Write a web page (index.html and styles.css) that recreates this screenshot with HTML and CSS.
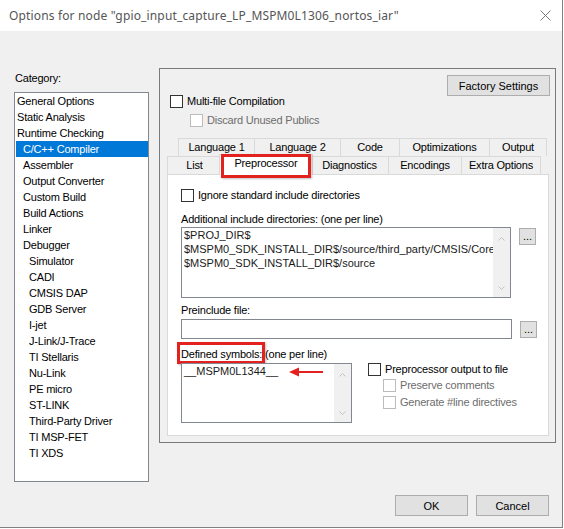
FILE: index.html
```html
<!DOCTYPE html>
<html lang="en">
<head>
    <meta charset="UTF-8">
    <title>Options for node</title>
    <link rel="stylesheet" href="styles.css">
</head>
<body>
<div class="window">
    <div class="titlebar">
        <span class="title">Options for node "gpio_input_capture_LP_MSPM0L1306_nortos_iar"</span>
        <svg class="close" width="11" height="11" viewBox="0 0 11 11">
            <path d="M0.5 0.5 L10.5 10.5 M10.5 0.5 L0.5 10.5" stroke="#7a7a7a" stroke-width="1" fill="none"/>
        </svg>
    </div>

    <div class="main">
        <!-- Category tree -->
        <div class="category">
            <div class="category-label">Category:</div>
            <ul class="category-list">
                <li>General Options</li>
                <li>Static Analysis</li>
                <li>Runtime Checking</li>
                <li class="sub selected">C/C++ Compiler</li>
                <li class="sub">Assembler</li>
                <li class="sub">Output Converter</li>
                <li class="sub">Custom Build</li>
                <li class="sub">Build Actions</li>
                <li class="sub">Linker</li>
                <li class="sub">Debugger</li>
                <li class="sub2">Simulator</li>
                <li class="sub2">CADI</li>
                <li class="sub2">CMSIS DAP</li>
                <li class="sub2">GDB Server</li>
                <li class="sub2">I-jet</li>
                <li class="sub2">J-Link/J-Trace</li>
                <li class="sub2">TI Stellaris</li>
                <li class="sub2">Nu-Link</li>
                <li class="sub2">PE micro</li>
                <li class="sub2">ST-LINK</li>
                <li class="sub2">Third-Party Driver</li>
                <li class="sub2">TI MSP-FET</li>
                <li class="sub2">TI XDS</li>
            </ul>
        </div>

        <!-- Compiler options -->
        <div class="options-panel">
            <div class="panel-head">
                <div class="head-checks">
                    <label class="check multi"><span class="box"></span>Multi-file Compilation</label>
                    <label class="check disabled discard"><span class="box"></span>Discard Unused Publics</label>
                </div>
                <button class="btn factory">Factory Settings</button>
            </div>

            <div class="tabs">
                <div class="tab-row back">
                    <div class="tab t-lang1">Language 1</div>
                    <div class="tab t-lang2">Language 2</div>
                    <div class="tab t-code">Code</div>
                    <div class="tab t-opt">Optimizations</div>
                    <div class="tab t-out">Output</div>
                </div>
                <div class="tab-row front">
                    <div class="tab t-list">List</div>
                    <div class="tab selected t-pre">Preprocessor<span class="mark"></span></div>
                    <div class="tab t-diag">Diagnostics</div>
                    <div class="tab t-enc">Encodings</div>
                    <div class="tab t-extra">Extra Options</div>
                </div>

                <div class="tab-page">
                    <label class="check"><span class="box"></span>Ignore standard include directories</label>

                    <div class="field-label">Additional include directories: (one per line)</div>
                    <div class="field-row">
                        <div class="textbox includes">
                            <div class="text-lines">
                                <div>$PROJ_DIR$</div>
                                <div>$MSPM0_SDK_INSTALL_DIR$/source/third_party/CMSIS/Core/Include</div>
                                <div>$MSPM0_SDK_INSTALL_DIR$/source</div>
                            </div>
                            <div class="vscroll">
                                <svg width="7" height="4" viewBox="0 0 7 4"><path d="M0.5 3.5 L3.5 0.5 L6.5 3.5" stroke="#c2c2c2" fill="none"/></svg>
                                <svg width="7" height="4" viewBox="0 0 7 4"><path d="M0.5 0.5 L3.5 3.5 L6.5 0.5" stroke="#c2c2c2" fill="none"/></svg>
                            </div>
                        </div>
                        <button class="btn browse">...</button>
                    </div>

                    <div class="field-label preinclude">Preinclude file:</div>
                    <div class="field-row single-row">
                        <div class="textbox single"></div>
                        <button class="btn browse">...</button>
                    </div>

                    <div class="symbols-row">
                        <div class="symbols-col">
                            <div class="field-label symbols-label"><span class="marked">Defined symbols:</span> (one per line)</div>
                            <div class="textbox symbols">
                                <div class="text-lines">
                                    <div>__MSPM0L1344__</div>
                                </div>
                                <svg class="arrow" width="37" height="12" viewBox="0 0 37 12">
                                    <path d="M10 6 L35 6" stroke="#e3211f" stroke-width="2"/>
                                    <path d="M1 6 L11 1.5 L11 10.5 Z" fill="#e3211f"/>
                                </svg>
                                <div class="vscroll">
                                    <svg width="7" height="4" viewBox="0 0 7 4"><path d="M0.5 3.5 L3.5 0.5 L6.5 3.5" stroke="#c2c2c2" fill="none"/></svg>
                                    <svg width="7" height="4" viewBox="0 0 7 4"><path d="M0.5 0.5 L3.5 3.5 L6.5 0.5" stroke="#c2c2c2" fill="none"/></svg>
                                </div>
                            </div>
                        </div>
                        <div class="pre-opts">
                            <label class="check"><span class="box"></span>Preprocessor output to file</label>
                            <label class="check disabled indent"><span class="box"></span>Preserve comments</label>
                            <label class="check disabled indent last"><span class="box"></span>Generate #line directives</label>
                        </div>
                    </div>
                </div>
            </div>
        </div>
    </div>

    <div class="footer">
        <button class="btn action">OK</button>
        <button class="btn action">Cancel</button>
    </div>
</div>
</body>
</html>
```

FILE: styles.css
```css
:root {
    --dialog-bg: #f0f0f0;
    --frame: #7a7a7a;
    --field-border: #828790;
    --tab-border: #d9d9d9;
    --btn-bg: #e1e1e1;
    --btn-border: #adadad;
    --gray-text: #6d6d6d;
    --select: #0078d7;
    --mark: #e3211f;
}

* {
    box-sizing: border-box;
}

body {
    margin: 0;
    background: #fff;
    font-family: "Liberation Sans", Arial, sans-serif;
    font-size: 11px;
    letter-spacing: -0.2px;
    color: #000;
}

.window {
    width: 563px;
    height: 528px;
    background: var(--dialog-bg);
    border-right: 1px solid #808080;
    border-bottom: 1px solid #808080;
    display: flex;
    flex-direction: column;
}

/* Title bar */
.titlebar {
    height: 31px;
    flex: none;
    background: #fff;
    display: flex;
    align-items: center;
    justify-content: space-between;
    padding: 0 11px 0 9px;
}

.title {
    font-family: "Noto Sans", sans-serif;
    font-size: 12px;
    letter-spacing: 0.15px;
    color: #555;
    white-space: nowrap;
}

.close {
    display: block;
}

.main {
    display: flex;
    align-items: flex-start;
    padding: 37px 0 0 14px;
}

/* Category list */
.category {
    width: 135px;
    padding-top: 4px;
}

.category-label {
    line-height: 13px;
    margin: 0 0 7px 1px;
}

.category-list {
    list-style: none;
    margin: 0;
    padding: 0;
    height: 390px;
    background: #fff;
    border: 1px solid var(--field-border);
}

.category-list li {
    height: 16px;
    line-height: 16px;
    margin-left: 1px;
    padding-left: 1px;
    white-space: nowrap;
}

.category-list li.sub {
    padding-left: 7px;
}

.category-list li.sub2 {
    padding-left: 13px;
}

.category-list li.selected {
    background: var(--select);
    color: #fff;
}

/* Right group */
.options-panel {
    margin-left: 10px;
    width: 397px;
    height: 375px;
    border: 1px solid var(--frame);
    padding: 6px 6px 6px 7px;
}

.panel-head {
    display: flex;
    justify-content: space-between;
    align-items: flex-start;
}

.head-checks {
    padding-top: 20px;
}

.check {
    display: flex;
    align-items: center;
    height: 13px;
    line-height: 13px;
    white-space: nowrap;
}

.box {
    flex: none;
    width: 13px;
    height: 13px;
    border: 1px solid #333;
    background: #fff;
    margin-right: 4px;
}

.check.disabled {
    color: var(--gray-text);
}

.check.disabled .box {
    border-color: #bcbcbc;
}

.check.multi {
    margin-left: 3px;
}

.check.discard {
    margin: 6px 0 0 23px;
}

.btn {
    font: inherit;
    color: #000;
    background: var(--btn-bg);
    border: 1px solid var(--btn-border);
    padding: 0;
}

.btn.factory {
    width: 103px;
    height: 21px;
    margin-right: -1px;
}

/* Tabs */
.tabs {
    margin-top: 11px;
}

.tab-row {
    display: flex;
    height: 18px;
}

.tab-row.back {
    margin-left: 11px;
}

.tab {
    height: 18px;
    border: 1px solid var(--tab-border);
    border-bottom: none;
    background: var(--dialog-bg);
    text-align: center;
    line-height: 16px;
    margin-left: -1px;
    white-space: nowrap;
}

.tab:first-child {
    margin-left: 0;
}

.tab.selected {
    position: relative;
    z-index: 1;
    height: 21px;
    margin: -2px -2px 0 -3px;
    background: #fff;
}

.t-lang1 { width: 77px; }
.t-lang2 { width: 87px; }
.t-code { width: 60px; }
.t-opt { width: 91px; }
.t-out { width: 58px; }
.t-list { width: 55px; }
.t-pre { width: 94px; }
.t-diag { width: 79px; }
.t-enc { width: 74px; }
.t-extra { width: 80px; }

/* red annotation around the active tab */
.mark {
    position: absolute;
    left: 1px;
    top: -1px;
    width: 90px;
    height: 24px;
    border: 3px solid var(--mark);
    box-shadow: 1px 1px 2px rgba(0, 0, 0, 0.25);
}

.tab-page {
    height: 262px;
    background: #fff;
    border: 1px solid var(--tab-border);
    padding: 14px 0 0 13px;
}

.field-label {
    line-height: 13px;
    margin-top: 11px;
    white-space: nowrap;
}

.field-label.preinclude {
    margin-top: 6px;
}

.field-row {
    display: flex;
    align-items: flex-start;
    margin-top: 1px;
}

.field-row.single-row {
    margin-top: 2px;
}

.textbox {
    position: relative;
    display: flex;
    background: #fff;
    border: 1px solid var(--field-border);
}

.textbox.includes {
    width: 330px;
    height: 71px;
}

.textbox.single {
    width: 331px;
    height: 20px;
}

.textbox.symbols {
    width: 171px;
    height: 60px;
    margin-top: 2px;
}

.text-lines {
    flex: 1;
    min-width: 0;
    overflow: hidden;
    white-space: nowrap;
    padding-left: 2px;
    line-height: 14px;
    letter-spacing: 0;
    color: #1a1a1a;
}

.vscroll {
    flex: none;
    width: 17px;
    background: var(--dialog-bg);
    display: flex;
    flex-direction: column;
    justify-content: space-between;
    align-items: center;
    padding: 9px 0 7px;
}

.vscroll svg {
    display: block;
}

.btn.browse {
    width: 17px;
    height: 17px;
    margin: 1px 0 0 8px;
    line-height: 13px;
}

.single-row .btn.browse {
    margin-top: 2px;
}

.symbols-row {
    display: flex;
    align-items: flex-start;
    margin-top: 9px;
}

.symbols-label {
    margin-top: 0;
}

.marked {
    position: relative;
    display: inline-block;
}

.marked::after {
    content: '';
    position: absolute;
    left: -4px;
    right: -3px;
    top: -6px;
    bottom: -3px;
    border: 3px solid var(--mark);
    box-shadow: 1px 1px 2px rgba(0, 0, 0, 0.25);
}

.arrow {
    position: absolute;
    left: 106px;
    top: 2px;
}

.pre-opts {
    margin-left: 16px;
    padding-top: 15px;
}

.check.indent {
    margin: 3px 0 0 15px;
}

.check.indent.last {
    margin-top: 4px;
}

/* Bottom buttons */
.footer {
    display: flex;
    justify-content: flex-end;
    gap: 8px;
    margin-top: 13px;
    padding-right: 13px;
}

.btn.action {
    width: 73px;
    height: 21px;
}
```
